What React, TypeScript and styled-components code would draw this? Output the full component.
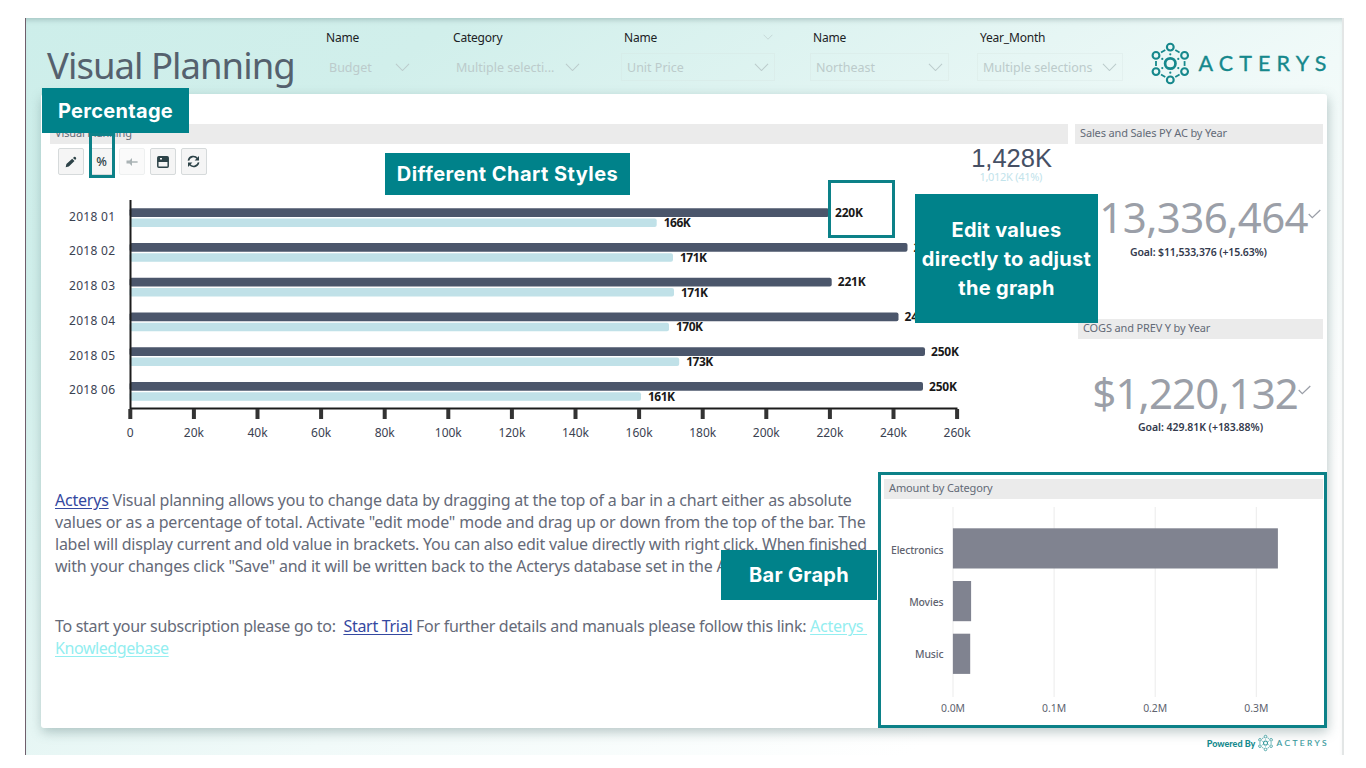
import React from 'react';
import styled, { createGlobalStyle } from 'styled-components';

const GlobalStyle = createGlobalStyle`
  * {
    box-sizing: border-box;
  }

  body {
    margin: 0;
    background: #ffffff;
    font-family: 'Noto Sans', 'Open Sans', sans-serif;
    overflow: hidden;
  }
`;

const Page = styled.div`
  position: relative;
  width: 1366px;
  height: 768px;
  padding: 18px 0 0 25px;
`;

const Report = styled.div`
  width: 1319px;
  height: 737px;
  display: flex;
  flex-direction: column;
  border-left: 1px solid #6f5f6c;
  border-right: 2px solid #e3e6e6;
  background: linear-gradient(146deg, #cdeeea 0%, #d1efeb 18%, #e6f6f4 44%, #f1faf9 57%, #ffffff 82%);
  box-shadow: inset 0 5px 5px -3px rgba(90, 120, 120, 0.35);
`;

const Header = styled.div`
  height: 76px;
  flex-shrink: 0;
  display: grid;
  grid-template-columns: 297px 127px 171px 189px 167px 174px 1fr;
`;

const Title = styled.div`
  padding: 22px 0 0 21px;
  font-size: 36.5px;
  line-height: 50px;
  letter-spacing: -0.97px;
  color: #55616e;
  white-space: nowrap;
`;

const Slicer = styled.div<{ $width: number }>`
  width: ${props => props.$width}px;
  padding-top: 11px;
`;

const SlicerLabel = styled.div`
  display: flex;
  justify-content: space-between;
  align-items: center;
  height: 16px;
  padding: 0 2px 0 3px;
  font-size: 12px;
  color: #1c2225;
  letter-spacing: -0.2px;
`;

const SlicerBox = styled.div<{ $outlined?: boolean }>`
  display: flex;
  justify-content: space-between;
  align-items: center;
  height: 28px;
  margin-top: 8px;
  padding: 0 5px;
  border: 1px solid ${props => props.$outlined ? 'rgba(212, 225, 223, 0.3)' : 'transparent'};
  font-size: 12.5px;
  color: #bccbcb;
  white-space: nowrap;
`;

const LogoHolder = styled.div`
  padding-top: 25px;
`;

const Panel = styled.div`
  width: 1286px;
  height: 634px;
  margin-left: 15px;
  flex-shrink: 0;
  background: #ffffff;
  border-radius: 3px;
  box-shadow: 1px 4px 12px rgba(70, 105, 105, 0.36);
`;

const TopRow = styled.div`
  display: flex;
  height: 378px;
  padding: 30px 4px 0 9px;
`;

const PlanningVisual = styled.div`
  width: 1018px;
  flex-shrink: 0;
`;

const VisualHeader = styled.div`
  height: 20px;
  padding-left: 5px;
  background: #ebebeb;
  color: #636a77;
  font-size: 11px;
  line-height: 17px;
  letter-spacing: -0.15px;
  white-space: nowrap;
`;

const ToolRow = styled.div`
  display: flex;
  justify-content: space-between;
  height: 50px;
  padding: 4px 16px 0 8px;
`;

const Toolbar = styled.div`
  display: flex;
  gap: 4.7px;
`;

const ToolButton = styled.button<{ $disabled?: boolean }>`
  display: flex;
  justify-content: center;
  align-items: center;
  width: 26px;
  height: 27px;
  padding: 0;
  border: 1px solid #d6dadb;
  border-radius: 2px;
  background: #f5f5f5;
  color: #2d4348;
  font: 500 12.5px 'Noto Sans', sans-serif;
  opacity: ${props => props.$disabled ? 0.4 : 1};
`;

const Total = styled.div`
  text-align: right;
  white-space: nowrap;
`;

const TotalValue = styled.div`
  font: 25.5px 'Liberation Sans', sans-serif;
  line-height: 20px;
  color: #465065;
`;

const TotalPrevious = styled.div`
  padding: 2px 10px 0 0;
  font-size: 11px;
  line-height: 14px;
  letter-spacing: -0.3px;
  color: #c2e3eb;
`;

const KpiColumn = styled.div`
  flex: 1;
  margin-left: 7px;
`;

const KpiCard = styled.div<{ $height: number; $left?: number }>`
  height: ${props => props.$height}px;
  margin-left: ${props => props.$left || 0}px;
`;

const KpiValue = styled.div<{ $top: number; $right: number; $track: number }>`
  display: flex;
  justify-content: flex-end;
  padding: ${props => props.$top}px ${props => props.$right}px 0 0;
  font-size: 42px;
  line-height: 48px;
  letter-spacing: ${props => props.$track}px;
  color: #9b9fa8;
  white-space: nowrap;

  svg {
    margin-top: 16px;
    flex-shrink: 0;
  }
`;

const KpiGoal = styled.div<{ $top: number; $shift: number; $track: number }>`
  padding: ${props => props.$top}px 0 0 ${props => props.$shift}px;
  font-size: 10.5px;
  font-weight: 600;
  line-height: 14px;
  letter-spacing: ${props => props.$track}px;
  color: #333a4d;
  white-space: nowrap;
`;

const BottomRow = styled.div`
  display: flex;
  height: 256px;
`;

const Notes = styled.div`
  width: 837px;
  padding: 17px 0 0 14px;
  font-size: 16px;
  line-height: 22.1px;
  color: #656a78;
`;

const NoteParagraph = styled.div`
  margin-bottom: 37.6px;
`;

const NoteLine = styled.div<{ $track: number }>`
  letter-spacing: ${props => props.$track}px;
  white-space: pre;
`;

const Link = styled.a<{ $pale?: boolean }>`
  color: ${props => props.$pale ? '#93eef0' : '#3448a0'};
  text-decoration: underline;
  text-underline-offset: 2px;
`;

const CategoryCard = styled.div`
  width: 449px;
  padding: 4px 1px 0 3px;
  border: 3px solid #0c8188;
  background: #ffffff;
`;

const Footer = styled.div`
  display: flex;
  justify-content: flex-end;
  align-items: center;
  gap: 3px;
  height: 27px;
  padding: 3px 15px 0 0;
`;

const PoweredBy = styled.span`
  font: 900 9px Lato, sans-serif;
  color: #158a8e;
`;

const Callout = styled.div<{ $x: number; $y: number; $w: number; $h: number; $track?: number }>`
  position: absolute;
  left: ${props => props.$x}px;
  top: ${props => props.$y}px;
  width: ${props => props.$w}px;
  height: ${props => props.$h}px;
  display: flex;
  justify-content: center;
  align-items: center;
  padding-top: 1px;
  background: #00828a;
  color: #ffffff;
  font: 700 20px/29px Inter, sans-serif;
  letter-spacing: ${props => props.$track || 0.3}px;
  text-align: center;
  white-space: pre;
`;

const Highlight = styled.div<{ $x: number; $y: number; $w: number; $h: number }>`
  position: absolute;
  left: ${props => props.$x}px;
  top: ${props => props.$y}px;
  width: ${props => props.$w}px;
  height: ${props => props.$h}px;
  border: 3px solid #0c8188;
`;

const Chart = styled.svg`
  display: block;
  overflow: visible;
`;

const ChevronIcon = ({ size = 15 }: { size?: number }): React.ReactElement => (
  <svg width={size} height={size / 2 + 1} viewBox="0 0 16 9" fill="none" stroke="#bccccc" strokeWidth="1.1">
    <path d="M1 1l7 7 7-7" />
  </svg>
);

const CheckIcon = (): React.ReactElement => (
  <svg width="13" height="10" viewBox="0 0 13 10" fill="none" stroke="#9b9fa8" strokeWidth="1.3">
    <path d="M0.7 5l3.6 3.6L12.3 1" />
  </svg>
);

const PencilIcon = (): React.ReactElement => (
  <svg width="12" height="12" viewBox="0 0 12 12" fill="currentColor">
    <path d="M0.7 11.3l0.7-3.2 5.8-5.4 2.3 2.4-5.7 5.5zM8 2l1-1q0.8-0.6 1.5 0.1l0.5 0.6q0.6 0.7-0.1 1.4l-0.7 0.9z" />
  </svg>
);

const BackIcon = (): React.ReactElement => (
  <svg width="12" height="12" viewBox="0 0 12 12" fill="currentColor">
    <path d="M0.5 4.6h3L6 2v8L3.5 7.4h-3zM6 5.2h5.6v1.6H6z" />
  </svg>
);

const SaveIcon = (): React.ReactElement => (
  <svg width="12" height="12" viewBox="0 0 12 12">
    <rect x="0.8" y="0.8" width="10.4" height="10.4" rx="1" fill="none" stroke="currentColor" strokeWidth="1.5" />
    <path d="M1 1h10v5H1z" fill="currentColor" />
    <path d="M3 2h2v1.6H3z" fill="#f5f5f5" />
  </svg>
);

const RefreshIcon = (): React.ReactElement => (
  <svg width="13" height="13" viewBox="0 0 13 13" fill="none" stroke="currentColor" strokeWidth="1.6">
    <path d="M1.4 5.6A5 5 0 0 1 10.4 3.6M11.6 7.4A5 5 0 0 1 2.6 9.4" />
    <path d="M12 1v4.4H7.6zM1 12V7.6h4.4z" fill="currentColor" stroke="none" />
  </svg>
);

const LogoSvg = styled.svg`
  display: block;
  flex-shrink: 0;
  overflow: visible;
`;

const nodes = [[0, -16.4], [14.3, -8.1], [14.3, 8.1], [0, 16.4], [-14.3, 8.1], [-14.3, -8.1]];

const Logo = ({ height, color }: { height: number; color: string }): React.ReactElement => (
  <LogoSvg width={height * 4.29} height={height} viewBox="0 0 176 41" fill="none" stroke={color}>
    <g transform="translate(19.3 20.5)">
      <circle r="5.2" strokeWidth="2.7" />
      {nodes.map(([x, y], index) => {
        const [nextX, nextY] = nodes[(index + 1) % nodes.length];
        const dx = nextX - x;
        const dy = nextY - y;
        return (
          <g key={index}>
            <circle cx={x} cy={y} r="3.4" strokeWidth="2.1" />
            <path
              d={`M${x + dx * 0.35} ${y + dy * 0.35}L${x + dx * 0.65} ${y + dy * 0.65}`}
              strokeWidth="1.8"
            />
            <circle cx={x * 0.56} cy={y * 0.56} r="1.1" fill={color} stroke="none" />
          </g>
        );
      })}
    </g>
    <text
      x="47.5"
      y="27.7"
      fontFamily="Lato"
      fontSize="21.5"
      fontWeight="400"
      fill={color}
      strokeWidth="0.35"
      textLength="128"
    >
      ACTERYS
    </text>
  </LogoSvg>
);

interface IPlanRow {
  label: string;
  end: number;
  value: string;
  previousEnd: number;
  previousValue: string;
}

// bar ends are in chart pixels, the label follows 6px after the bar
const planRows: IPlanRow[] = [
  { label: '2018 01', end: 779, value: '220K', previousEnd: 606.7, previousValue: '166K' },
  { label: '2018 02', end: 857.5, value: '244K', previousEnd: 623, previousValue: '171K' },
  { label: '2018 03', end: 781.7, value: '221K', previousEnd: 624, previousValue: '171K' },
  { label: '2018 04', end: 848.5, value: '241K', previousEnd: 619, previousValue: '170K' },
  { label: '2018 05', end: 875, value: '250K', previousEnd: 629.2, previousValue: '173K' },
  { label: '2018 06', end: 873, value: '250K', previousEnd: 591, previousValue: '161K' },
];

const planTicks = Array.from({ length: 14 }, (_, index) => index ? `${index * 20}k` : '0');

const PlanningChart = (): React.ReactElement => (
  <Chart width="1018" height="256" viewBox="0 0 1018 256" fontSize="12">
    {planRows.map((row, index) => {
      const y = 14.2 + index * 34.75;
      return (
        <g key={row.label}>
          <text x="19" y={y + 12.3} textLength="46" fill="#3b4252">{row.label}</text>
          <rect x="79.6" y={y} width={row.end - 79.6} height="8.7" rx="2" fill="#4b566b" />
          <rect x="79.6" y={y + 10.4} width={row.previousEnd - 79.6} height="8.4" rx="2" fill="#c0e1e8" />
          <text x={row.end + 6} y={y + 8.6} textLength="28" fontWeight="700" fill="#191919">{row.value}</text>
          <text x={row.previousEnd + 7} y={y + 18.8} textLength="27" fontWeight="700" fill="#191919">{row.previousValue}</text>
        </g>
      );
    })}
    <path d="M80.5 6v208.5H907.5" fill="none" stroke="#1c1c1c" strokeWidth="2" />
    {planTicks.map((tick, index) => {
      const x = 80.3 + index * 63.6;
      return (
        <g key={tick}>
          <rect x={x - 2} y="215" width="4" height="10" fill="#333333" />
          <text x={x} y="242.8" textAnchor="middle" fill="#3b4252">{tick}</text>
        </g>
      );
    })}
  </Chart>
);

const categories = [
  { name: 'Electronics', width: 325 },
  { name: 'Movies', width: 18.2 },
  { name: 'Music', width: 17.3 },
];

const CategoryChart = (): React.ReactElement => (
  <Chart width="439" height="220" viewBox="0 0 439 220" fontSize="10.4" fill="#60636f">
    {['0.0M', '0.1M', '0.2M', '0.3M'].map((tick, index) => {
      const x = 69 + index * 101.1;
      return (
        <g key={tick}>
          <path d={`M${x} 8v190`} stroke="#ebebeb" />
          <text x={x} y="212.5" textAnchor="middle">{tick}</text>
        </g>
      );
    })}
    {categories.map((category, index) => (
      <g key={category.name}>
        <rect x="68.9" y={29.3 + index * 52.7} width={category.width} height="40.2" fill="#808390" />
        <text x="59.5" y={54.5 + index * 52.3} textAnchor="end" fontWeight="500" letterSpacing="-0.1">{category.name}</text>
      </g>
    ))}
  </Chart>
);

const App = (): React.ReactElement => (
  <Page>
    <GlobalStyle />
    <Report>
      <Header>
        <Title>Visual Planning</Title>
        <Slicer $width={93}>
          <SlicerLabel>Name</SlicerLabel>
          <SlicerBox>Budget<ChevronIcon /></SlicerBox>
        </Slicer>
        <Slicer $width={136}>
          <SlicerLabel>Category</SlicerLabel>
          <SlicerBox>Multiple selecti...<ChevronIcon /></SlicerBox>
        </Slicer>
        <Slicer $width={154}>
          <SlicerLabel>Name<ChevronIcon size={10} /></SlicerLabel>
          <SlicerBox $outlined>Unit Price<ChevronIcon /></SlicerBox>
        </Slicer>
        <Slicer $width={139}>
          <SlicerLabel>Name</SlicerLabel>
          <SlicerBox $outlined>Northeast<ChevronIcon /></SlicerBox>
        </Slicer>
        <Slicer $width={146}>
          <SlicerLabel>Year_Month</SlicerLabel>
          <SlicerBox $outlined>Multiple selections<ChevronIcon /></SlicerBox>
        </Slicer>
        <LogoHolder>
          <Logo height={41} color="#16888c" />
        </LogoHolder>
      </Header>
      <Panel>
        <TopRow>
          <PlanningVisual>
            <VisualHeader>Visual Planning</VisualHeader>
            <ToolRow>
              <Toolbar>
                <ToolButton><PencilIcon /></ToolButton>
                <ToolButton>%</ToolButton>
                <ToolButton $disabled><BackIcon /></ToolButton>
                <ToolButton><SaveIcon /></ToolButton>
                <ToolButton><RefreshIcon /></ToolButton>
              </Toolbar>
              <Total>
                <TotalValue>1,428K</TotalValue>
                <TotalPrevious>1,012K (41%)</TotalPrevious>
              </Total>
            </ToolRow>
            <PlanningChart />
          </PlanningVisual>
          <KpiColumn>
            <KpiCard $height={195}>
              <VisualHeader>Sales and Sales PY AC by Year</VisualHeader>
              <KpiValue $top={49} $right={2} $track={-0.6}>$13,336,464<CheckIcon /></KpiValue>
              <KpiGoal $top={4} $shift={55} $track={-0.13}>Goal: $11,533,376 (+15.63%)</KpiGoal>
            </KpiCard>
            <KpiCard $height={130} $left={3}>
              <VisualHeader>COGS and PREV Y by Year</VisualHeader>
              <KpiValue $top={30} $right={12} $track={-0.9}>$1,220,132<CheckIcon /></KpiValue>
              <KpiGoal $top={3} $shift={60} $track={-0.05}>Goal: 429.81K (+183.88%)</KpiGoal>
            </KpiCard>
          </KpiColumn>
        </TopRow>
        <BottomRow>
          <Notes>
            <NoteParagraph>
              <NoteLine $track={-0.22}><Link>Acterys</Link> Visual planning allows you to change data by dragging at the top of a bar in a chart either as absolute</NoteLine>
              <NoteLine $track={-0.18}>values or as a percentage of total. Activate "edit mode" mode and drag up or down from the top of the bar. The</NoteLine>
              <NoteLine $track={-0.24}>label will display current and old value in brackets. You can also edit value directly with right click. When finished</NoteLine>
              <NoteLine $track={-0.21}>with your changes click "Save" and it will be written back to the Acterys database set in the Acterys</NoteLine>
            </NoteParagraph>
            <NoteLine $track={-0.29}>To start your subscription please go to:  <Link>Start Trial</Link> For further details and manuals please follow this link: <Link $pale>Acterys </Link></NoteLine>
            <NoteLine $track={-0.42}><Link $pale>Knowledgebase</Link></NoteLine>
          </Notes>
          <CategoryCard>
            <VisualHeader>Amount by Category</VisualHeader>
            <CategoryChart />
          </CategoryCard>
        </BottomRow>
      </Panel>
      <Footer>
        <PoweredBy>Powered By</PoweredBy>
        <Logo height={16} color="#35999c" />
      </Footer>
    </Report>
    <Callout $x={42} $y={88} $w={147} $h={45}>Percentage</Callout>
    <Callout $x={385} $y={153} $w={245} $h={42} $track={0.45}>Different Chart Styles</Callout>
    <Callout $x={915} $y={194} $w={183} $h={129}>{'Edit values\ndirectly to adjust\nthe graph'}</Callout>
    <Callout $x={721} $y={550} $w={156} $h={50}>Bar Graph</Callout>
    <Highlight $x={89} $y={133} $w={26} $h={45} />
    <Highlight $x={828} $y={180} $w={67} $h={58} />
  </Page>
);

export default App;
